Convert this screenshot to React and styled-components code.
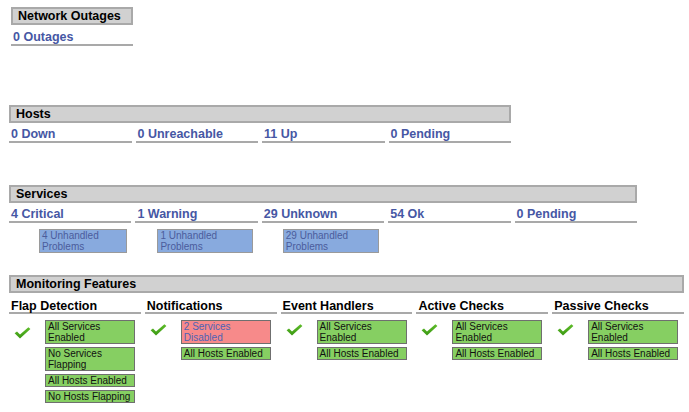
import React from 'react'
import styled, { createGlobalStyle } from 'styled-components'

const GlobalStyle = createGlobalStyle`
  html, body {
    margin: 0;
    padding: 0;
    background: #ffffff;
  }
  body {
    font-family: "Liberation Sans", Arial, sans-serif;
    color: #000;
  }
`

const Page = styled.div`
  padding: 7px 0 0 9px;
  display: flex;
  flex-direction: column;
  align-items: flex-start;
`

const Section = styled.div`
  width: ${p => p.width}px;
  margin-top: ${p => p.top || 0}px;
  margin-left: ${p => p.left || 0}px;
`

const SectionHeader = styled.div`
  height: 14px;
  line-height: 14px;
  border: 2px solid #a9a9a9;
  background: #d1d1d1;
  padding-left: 5px;
  font-size: 12.5px;
  font-weight: bold;
  color: #000;
`

const Grid = styled.div`
  display: grid;
  grid-template-columns: repeat(${p => p.cols}, 1fr);
  column-gap: 4px;
`

const StatCell = styled.div`
  padding: ${p => p.pad || 5}px 0 0 2px;
  line-height: 13px;
  border-bottom: 2px solid #a9a9a9;
  font-size: 12.5px;
  font-weight: bold;
  color: #4657a4;
  white-space: nowrap;
`

const Cell = styled.div`
  display: flex;
  flex-direction: column;
`

const ProblemBox = styled.div`
  margin-top: 6px;
  margin-left: ${p => p.offset}px;
  width: ${p => p.w}px;
  box-sizing: border-box;
  border: 1px solid #9a9a9a;
  background: #88aade;
  color: #4b5c9c;
  font-size: 10px;
  line-height: 11px;
  padding: 0 2px;
`

const FeatureHeading = styled.div`
  padding: 7px 0 0 2px;
  line-height: 12px;
  border-bottom: 2px solid #a9a9a9;
  font-size: 12.5px;
  font-weight: bold;
  color: #000;
  white-space: nowrap;
`

const FeatureBody = styled.div`
  display: grid;
  grid-template-columns: 36px 90px;
  padding-top: 6px;
`

const CheckWrap = styled.div`
  padding: ${p => p.dy}px 0 0 5px;
`

const BoxStack = styled.div`
  display: flex;
  flex-direction: column;
  gap: 3px;
`

const StateBox = styled.div`
  box-sizing: border-box;
  border: 1px solid #6f6f6f;
  background: ${p => (p.bad ? '#f78a8a' : '#86cf62')};
  color: ${p => (p.bad ? '#5062b4' : '#111')};
  font-size: 10px;
  line-height: 11px;
  padding: 0 2px;
  white-space: ${p => (p.one ? 'nowrap' : 'normal')};
`

const Check = () => (
  <svg width="17" height="12" viewBox="0 0 17 12">
    <defs>
      <linearGradient id="chk" x1="0" y1="0" x2="0" y2="1">
        <stop offset="0" stopColor="#5fbd2a" />
        <stop offset="1" stopColor="#3a9812" />
      </linearGradient>
    </defs>
    <path
      d="M0.6 6.2 L3 4.4 L6 7.6 L14.4 0.2 L16.4 2 L6 11.6 Z"
      fill="url(#chk)"
    />
  </svg>
)

const hosts = ['0 Down', '0 Unreachable', '11 Up', '0 Pending']

const services = [
  { label: '4 Critical', problems: '4 Unhandled Problems', offset: 30, w: 88 },
  { label: '1 Warning', problems: '1 Unhandled Problems', offset: 22, w: 96 },
  { label: '29 Unknown', problems: '29 Unhandled Problems', offset: 21, w: 96 },
  { label: '54 Ok' },
  { label: '0 Pending' },
]

const features = [
  {
    name: 'Flap Detection',
    dy: 5,
    boxes: [
      { text: 'All Services Enabled' },
      { text: 'No Services Flapping' },
      { text: 'All Hosts Enabled', one: true },
      { text: 'No Hosts Flapping', one: true },
    ],
  },
  {
    name: 'Notifications',
    dy: 2,
    boxes: [
      { text: '2 Services Disabled', bad: true },
      { text: 'All Hosts Enabled', one: true },
    ],
  },
  {
    name: 'Event Handlers',
    dy: 2,
    boxes: [
      { text: 'All Services Enabled' },
      { text: 'All Hosts Enabled', one: true },
    ],
  },
  {
    name: 'Active Checks',
    dy: 2,
    boxes: [
      { text: 'All Services Enabled' },
      { text: 'All Hosts Enabled', one: true },
    ],
  },
  {
    name: 'Passive Checks',
    dy: 2,
    boxes: [
      { text: 'All Services Enabled' },
      { text: 'All Hosts Enabled', one: true },
    ],
  },
]

export default function App() {
  return (
    <Page>
      <GlobalStyle />

      <Section width={122} left={2}>
        <SectionHeader>Network Outages</SectionHeader>
        <StatCell pad={6}>0 Outages</StatCell>
      </Section>

      <Section width={502} top={59}>
        <SectionHeader>Hosts</SectionHeader>
        <Grid cols={4}>
          {hosts.map(h => (
            <StatCell key={h}>{h}</StatCell>
          ))}
        </Grid>
      </Section>

      <Section width={628} top={42}>
        <SectionHeader>Services</SectionHeader>
        <Grid cols={5}>
          {services.map(s => (
            <Cell key={s.label}>
              <StatCell>{s.label}</StatCell>
              {s.problems && (
                <ProblemBox offset={s.offset} w={s.w}>
                  {s.problems}
                </ProblemBox>
              )}
            </Cell>
          ))}
        </Grid>
      </Section>

      <Section width={675} top={22}>
        <SectionHeader>Monitoring Features</SectionHeader>
        <Grid cols={5}>
          {features.map(f => (
            <Cell key={f.name}>
              <FeatureHeading>{f.name}</FeatureHeading>
              <FeatureBody>
                <CheckWrap dy={f.dy}>
                  <Check />
                </CheckWrap>
                <BoxStack>
                  {f.boxes.map((b, i) => (
                    <StateBox key={i} bad={b.bad} one={b.one}>
                      {b.text}
                    </StateBox>
                  ))}
                </BoxStack>
              </FeatureBody>
            </Cell>
          ))}
        </Grid>
      </Section>
    </Page>
  )
}
